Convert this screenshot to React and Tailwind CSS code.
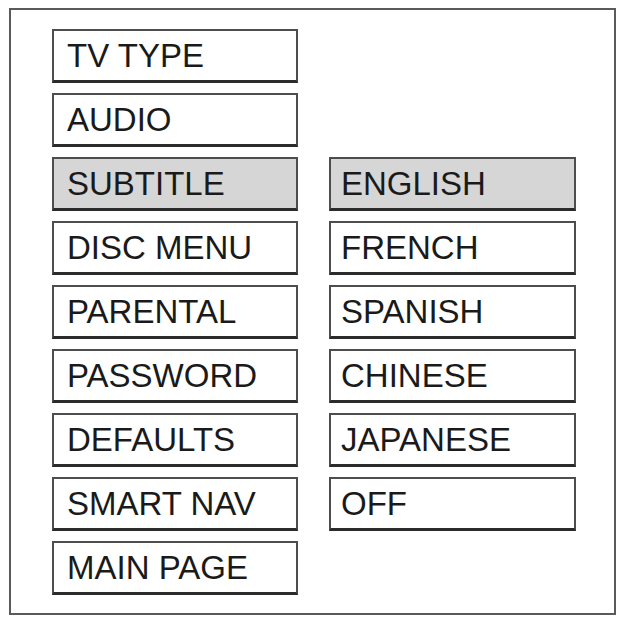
import React from 'react';

const menuItems = ['TV TYPE', 'AUDIO', 'SUBTITLE', 'DISC MENU', 'PARENTAL', 'PASSWORD', 'DEFAULTS', 'SMART NAV', 'MAIN PAGE'];

// subtitle choices sit beside rows 3..8
const languages = [
  { label: 'ENGLISH', row: 'row-start-3' },
  { label: 'FRENCH', row: 'row-start-4' },
  { label: 'SPANISH', row: 'row-start-5' },
  { label: 'CHINESE', row: 'row-start-6' },
  { label: 'JAPANESE', row: 'row-start-7' },
  { label: 'OFF', row: 'row-start-8' },
];

const MenuBox = ({ label, active, className = '' }) => (
  <div
    className={`h-[54px] flex items-center border-2 border-b-[3px] border-[#4d4d4d] border-b-[#2b2b2b] text-[33px] leading-none text-[#1a1a1a] ${
      active ? 'bg-[#d6d6d6]' : 'bg-white'
    } ${className}`}
  >
    {label}
  </div>
);

const App = () => {
  return (
    <div className="w-[618px] h-[617px] bg-white pt-[8px] pl-[9px]" style={{ fontFamily: '"Liberation Sans", Arial, sans-serif' }}>
      <div className="w-[607px] h-[607px] border-2 border-[#5a5a5a] pl-[41px] pt-[19px]">
        <div className="grid grid-cols-[246px_247px] gap-x-[31px] gap-y-[10px]">
          {menuItems.map((item) => (
            <MenuBox key={item} label={item} active={item === 'SUBTITLE'} className="col-start-1 pl-[13px]" />
          ))}
          {languages.map((lang) => (
            <MenuBox key={lang.label} label={lang.label} active={lang.label === 'ENGLISH'} className={`col-start-2 pl-[10px] ${lang.row}`} />
          ))}
        </div>
      </div>
    </div>
  );
};

export default App;
